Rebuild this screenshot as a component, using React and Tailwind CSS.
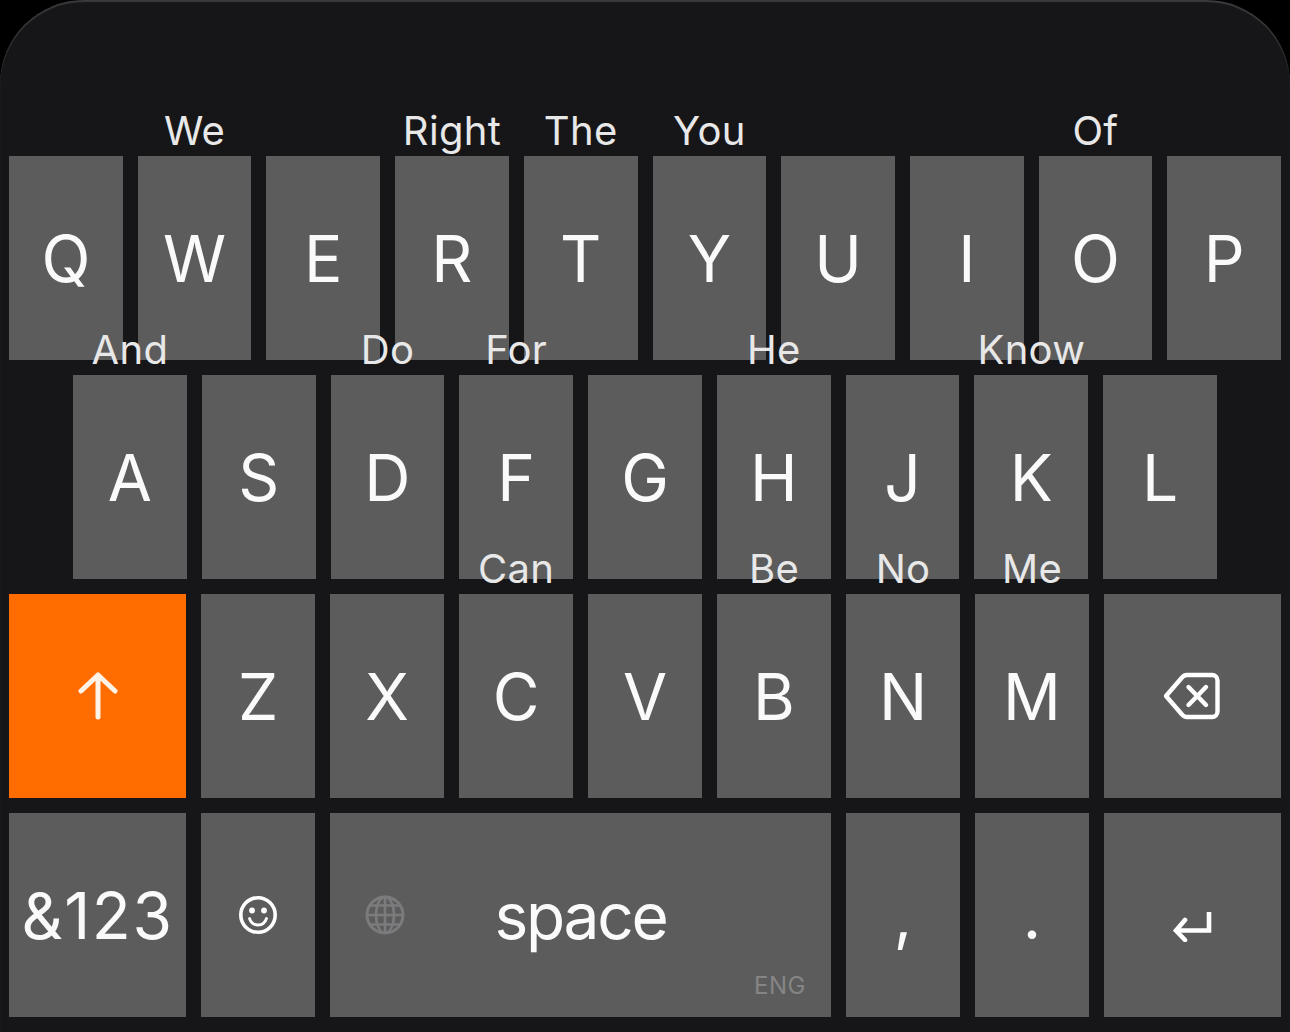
const FONT = "font-['Inter',sans-serif]";

function Key({ label, hint, className = "flex-1", children, labelClass = "" }) {
  return (
    <div className={`relative flex min-w-0 items-center justify-center bg-[#5c5c5c] text-[64px] font-[380] leading-none text-[#fafafa] ${className}`}>
      {hint && (
        <span className="absolute bottom-[100%] left-0 right-0 z-10 mb-[1px] whitespace-nowrap text-center text-[40px] font-[370] leading-[48px] tracking-[0.3px] text-[#e8e8e8]">
          {hint}
        </span>
      )}
      {label && <span className={`translate-y-[1px] ${labelClass}`}>{label}</span>}
      {children}
    </div>
  );
}

function ShiftIcon() {
  return (
    <svg width="40" height="48" viewBox="0 0 40 48" fill="none" stroke="#fff3e8" strokeWidth="5" strokeLinecap="round" strokeLinejoin="round">
      <path d="M20 45V3M3 19L20 3L37 19" />
    </svg>
  );
}

function BackspaceIcon() {
  return (
    <svg width="58" height="48" viewBox="0 0 58 48" fill="none" stroke="#ffffff" strokeWidth="4.4" strokeLinecap="round" strokeLinejoin="round" className="-translate-x-[1px]">
      <path d="M3 24L19 5.5C20.5 3.6 21.5 3 24 3H49C52 3 54.5 5.5 54.5 8.5V39.5C54.5 42.5 52 45 49 45H24C21.5 45 20.5 44.4 19 42.5Z" />
      <path d="M25.5 15L43 33M43 15L25.5 33" />
    </svg>
  );
}

function EmojiIcon() {
  return (
    <svg width="40" height="40" viewBox="0 0 40 40" fill="none">
      <circle cx="20" cy="20" r="17.2" stroke="#ffffff" strokeWidth="3.6" />
      <circle cx="14" cy="15.5" r="2.9" fill="#ffffff" />
      <circle cx="26" cy="15.5" r="2.9" fill="#ffffff" />
      <path d="M11.5 23.5C13 28 16 30 20 30C24 30 27 28 28.5 23.5" stroke="#ffffff" strokeWidth="2.8" strokeLinecap="round" />
    </svg>
  );
}

function GlobeIcon() {
  return (
    <svg width="40" height="40" viewBox="0 0 40 40" fill="none" stroke="#7b7b7d" strokeWidth="2.6">
      <circle cx="20" cy="20" r="18" strokeWidth="3" />
      <ellipse cx="20" cy="20" rx="9" ry="18" />
      <path d="M20 2V38M5 10.5H35M2 20H38M5 29.5H35" />
    </svg>
  );
}

function ReturnIcon() {
  return (
    <svg width="40" height="30" viewBox="0 0 40 30" fill="none" stroke="#ffffff" strokeWidth="4.6" strokeLinecap="butt" strokeLinejoin="miter" className="mt-[23px]">
      <path d="M36 0V18.5H3" />
      <path d="M12 8L3 18.5L12 28" strokeLinecap="round" />
    </svg>
  );
}

const row1 = [["Q"], ["W", "We"], ["E"], ["R", "Right"], ["T", "The"], ["Y", "You"], ["U"], ["I"], ["O", "Of"], ["P"]];
const row2 = [["A", "And"], ["S"], ["D", "Do"], ["F", "For"], ["G"], ["H", "He"], ["J"], ["K", "Know"], ["L"]];
const row3 = [["Z"], ["X"], ["C", "Can"], ["V"], ["B", "Be"], ["N", "No"], ["M", "Me"]];

export default function App() {
  return (
    <div className={`h-[1032px] w-[1290px] overflow-hidden bg-black ${FONT}`}>
      <div className="flex h-full flex-col gap-[15px] rounded-t-[84px] bg-[#161618] px-[9px] pb-[15px] pt-[156px] shadow-[inset_0_2px_1px_rgba(255,255,255,0.16)]">
        <div className="flex h-[204px] gap-[15px]">
          {row1.map(([l, h]) => <Key key={l} label={l} hint={h} />)}
        </div>
        <div className="flex h-[204px] gap-[15px] px-[64px]">
          {row2.map(([l, h]) => <Key key={l} label={l} hint={h} />)}
        </div>
        <div className="flex h-[204px] gap-[15px]">
          <Key className="w-[177px] shrink-0 !bg-[#ff6d00]"><ShiftIcon /></Key>
          {row3.map(([l, h]) => <Key key={l} label={l} hint={h} />)}
          <Key className="w-[177px] shrink-0"><BackspaceIcon /></Key>
        </div>
        <div className="flex h-[204px] gap-[15px]">
          <Key className="w-[177px] shrink-0" label="&123" labelClass="tracking-[1.6px]" />
          <Key className="w-[114px] shrink-0"><EmojiIcon /></Key>
          <Key className="flex-1" label="space" labelClass="tracking-[-2.3px]">
            <span className="absolute left-[35px] top-[82px] flex"><GlobeIcon /></span>
            <span className="absolute bottom-[17px] right-[25px] text-[24px] font-normal leading-[28px] tracking-[0.5px] text-[#858585]">ENG</span>
          </Key>
          <Key className="w-[114px] shrink-0" label="," />
          <Key className="w-[114px] shrink-0" label="." />
          <Key className="w-[177px] shrink-0"><ReturnIcon /></Key>
        </div>
      </div>
    </div>
  );
}
